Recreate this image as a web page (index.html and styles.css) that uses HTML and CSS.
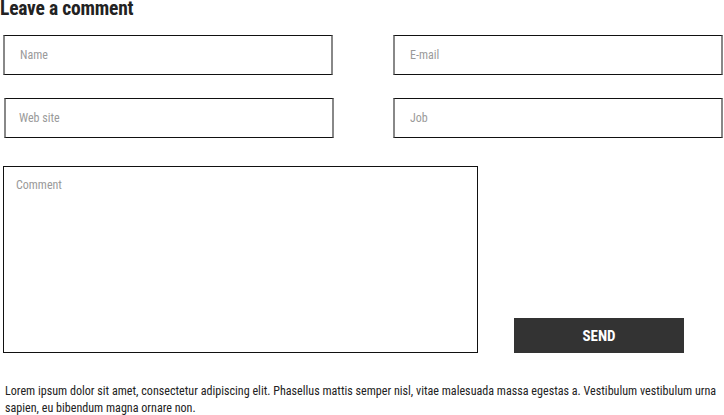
FILE: index.html
```html
<!DOCTYPE html>
<html>
<head>
<meta charset="utf-8">
<link rel="stylesheet" href="styles.css">
</head>
<body>
<div class="comment-form">
  <h2 class="title">Leave a comment</h2>
  <div class="fields">
    <input class="field" type="text" placeholder="Name">
    <input class="field" type="text" placeholder="E-mail">
    <input class="field field-shift" type="text" placeholder="Web site">
    <input class="field" type="text" placeholder="Job">
  </div>
  <div class="message-row">
    <textarea class="message" placeholder="Comment"></textarea>
    <button class="send" type="button">SEND</button>
  </div>
  <p class="note">Lorem ipsum dolor sit amet, consectetur adipiscing elit. Phasellus mattis semper nisl, vitae malesuada massa egestas a. Vestibulum vestibulum urna sapien, eu bibendum magna ornare non.</p>
</div>
</body>
</html>
```

FILE: styles.css
```css
html, body {
  margin: 0;
  padding: 0;
  background: #fff;
}
body {
  font-family: "Roboto Condensed", "Liberation Sans Narrow", Roboto, sans-serif;
  font-stretch: 75%;
  color: #222;
}
.comment-form {
  width: 724px;
}
.title {
  margin: 0;
  font-size: 19.5px;
  line-height: 17px;
  font-weight: 700;
  color: #222;
  letter-spacing: -0.2px;
}
.fields {
  display: grid;
  grid-template-columns: 330px 330px;
  column-gap: 60px;
  row-gap: 23px;
  padding: 18px 0 0 3px;
}
.field {
  box-sizing: border-box;
  height: 40px;
  width: 330px;
  margin: 0;
  padding: 0 0 0 15px;
  border-style: solid;
  border-width: 1px 2px;
  border-color: #111 #888;
  font-family: inherit;
  font-stretch: 75%;
  font-size: 12px;
  color: #222;
  background: #fff;
  outline: none;
}
.field-shift {
  margin-left: 1px;
  padding-left: 13px;
}
.field::placeholder,
.message::placeholder {
  color: #9a9a9a;
}
.message-row {
  display: flex;
  align-items: flex-end;
  padding: 28px 0 0 3px;
}
.message {
  box-sizing: border-box;
  width: 475px;
  height: 187px;
  margin: 0;
  padding: 11px 12px;
  border: 1px solid #111;
  font-family: inherit;
  font-stretch: 75%;
  font-size: 12px;
  resize: none;
  outline: none;
  display: block;
}
.send {
  margin: 0 0 0 36px;
  width: 170px;
  height: 35px;
  border: none;
  background: #333;
  color: #fff;
  font-family: inherit;
  font-stretch: 75%;
  font-weight: 700;
  font-size: 15px;
  padding: 0;
}
.note {
  margin: 30px 0 0 5px;
  font-size: 12.1px;
  line-height: 17px;
  color: #222;
}
```
